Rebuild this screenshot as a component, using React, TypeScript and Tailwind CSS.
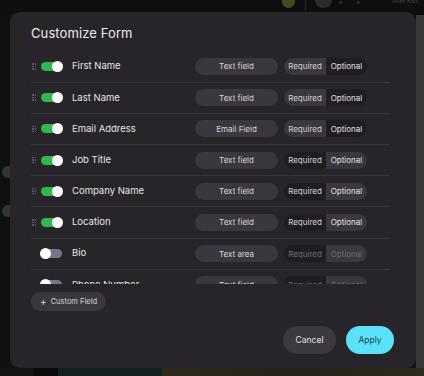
import React from "react";

type Row = { label: string; type: string; req: boolean; on: boolean };

const rows: Row[] = [
  { label: "First Name", type: "Text field", req: true, on: true },
  { label: "Last Name", type: "Text field", req: true, on: true },
  { label: "Email Address", type: "Email Field", req: true, on: true },
  { label: "Job Title", type: "Text field", req: false, on: true },
  { label: "Company Name", type: "Text field", req: false, on: true },
  { label: "Location", type: "Text field", req: false, on: true },
  { label: "Bio", type: "Text area", req: false, on: false },
  { label: "Phone Number", type: "Text field", req: false, on: false },
];

function Handle() {
  return (
    <div className="grid grid-cols-2 gap-x-[1px] gap-y-[1px] w-[4px]">
      {Array.from({ length: 6 }).map((_, i) => (
        <span key={i} className="block w-[1.5px] h-[1.5px] rounded-full bg-[#6d6b72]" />
      ))}
    </div>
  );
}

function Toggle({ on }: { on: boolean }) {
  return (
    <div className={`relative w-[21px] h-[9px] rounded-full ${on ? "bg-[#2fb84b]" : "bg-[#77758a]"}`}>
      <span
        className={`absolute top-[-1px] w-[11px] h-[11px] rounded-full bg-white ${on ? "right-[-1px]" : "left-[-1px]"}`}
      />
    </div>
  );
}

export default function App() {
  return (
    <div
      className="relative w-[424px] h-[376px] overflow-hidden bg-[#121214]"
      style={{ fontFamily: "Inter, 'Noto Sans', sans-serif" }}
    >
      {/* dimmed background page */}
      <div className="absolute left-0 top-0 w-[424px] h-[15px] bg-[#0e0e10]">
        <span className="absolute left-[282px] top-[-5px] w-[13px] h-[13px] rounded-full bg-[#444d22]" />
        <span className="absolute left-[305px] top-0 w-[1px] h-[10px] bg-[#2a2a2c]" />
        <span className="absolute left-[315px] top-[-8px] w-[17px] h-[16px] rounded-full bg-[#2c2c2e]" />
        <span className="absolute left-[339px] top-[1px] w-[3px] h-[3px] rounded-full bg-[#2a2a2c]" />
        <span className="absolute left-[357px] top-[1px] w-[3px] h-[3px] rounded-full bg-[#2a2a2c]" />
        <span className="absolute left-[392px] top-[-6px] text-[8px] text-[#3a3a3c]">Market</span>
      </div>
      <div className="absolute left-[416px] top-[15px] w-[8px] h-[361px] bg-[#383838]" />
      <div className="absolute left-0 top-[15px] w-[10px] h-[361px] bg-[#101012]">
        <span className="absolute left-[2px] top-[151px] w-[12px] h-[12px] rounded-full bg-[#2e3a2c]" />
        <span className="absolute left-[2px] top-[190px] w-[12px] h-[12px] rounded-full bg-[#2e3a2c]" />
      </div>
      <div className="absolute left-0 top-[368px] w-[424px] h-[8px] flex">
        <div className="w-[34px] bg-[#141414]" />
        <div className="w-[24px] bg-[#0a0a0a]" />
        <div className="w-[104px] bg-[#12211f]" />
        <div className="flex-1 bg-gradient-to-r from-[#2e2a1c] via-[#24221a] to-[#2f2a1d]" />
      </div>

      {/* modal */}
      <div className="absolute left-[10px] top-[12px] w-[406px] h-[356px] rounded-[10px] bg-[#27252a] flex flex-col pl-[21px] pr-[22px] pt-[14px] pb-[14px]">
        <div className="h-[16px] flex items-center text-[13px] text-[#ececec] tracking-[0.1px]">Customize Form</div>
        <div className="mt-[9.4px] h-[232.6px] overflow-hidden mr-[4px]">
          {rows.map((r) => {
            const dim = !r.on;
            return (
              <div key={r.label} className="h-[31.2px] flex items-center border-b border-[#38363b]">
                <div className="w-[10px] pl-[1px] flex items-center">{r.on ? <Handle /> : null}</div>
                <Toggle on={r.on} />
                <div className="ml-[10px] w-[123px] text-[9.5px] text-[#e6e6e6]">{r.label}</div>
                <div className="w-[83px] h-[17px] rounded-full bg-[#3a383e] flex items-center justify-center text-[8px] text-[#d6d6d8]">
                  {r.type}
                </div>
                <div className="ml-[6px] w-[83px] h-[17px] rounded-full bg-[#1f1d22] overflow-hidden flex text-[8px]">
                  <div
                    className={`w-[42px] flex items-center justify-center ${r.req ? "bg-[#3a383e]" : ""} ${dim ? "text-[#6e6c72]" : "text-[#d2d2d4]"}`}
                  >
                    Required
                  </div>
                  <div
                    className={`flex-1 flex items-center justify-center ${!r.req ? "bg-[#3a383e]" : ""} ${dim ? "text-[#6e6c72]" : "text-[#e2e2e4]"}`}
                  >
                    Optional
                  </div>
                </div>
              </div>
            );
          })}
        </div>
        <div className="mt-[8px]">
          <button className="h-[19px] w-[75px] rounded-full bg-[#3a383e] flex items-center pl-[9px] gap-[4px] text-[7.5px] text-[#d8d8da]">
            <span className="text-[10px] leading-none">+</span>
            <span>Custom Field</span>
          </button>
        </div>
        <div className="mt-auto flex justify-end gap-[10px]">
          <button className="w-[53px] h-[28px] rounded-full bg-[#3c3a3f] text-[8.5px] text-[#e0e0e2]">Cancel</button>
          <button className="w-[48px] h-[28px] rounded-full bg-[#5be1fa] text-[8.5px] text-[#1b3e48]">Apply</button>
        </div>
      </div>
    </div>
  );
}
